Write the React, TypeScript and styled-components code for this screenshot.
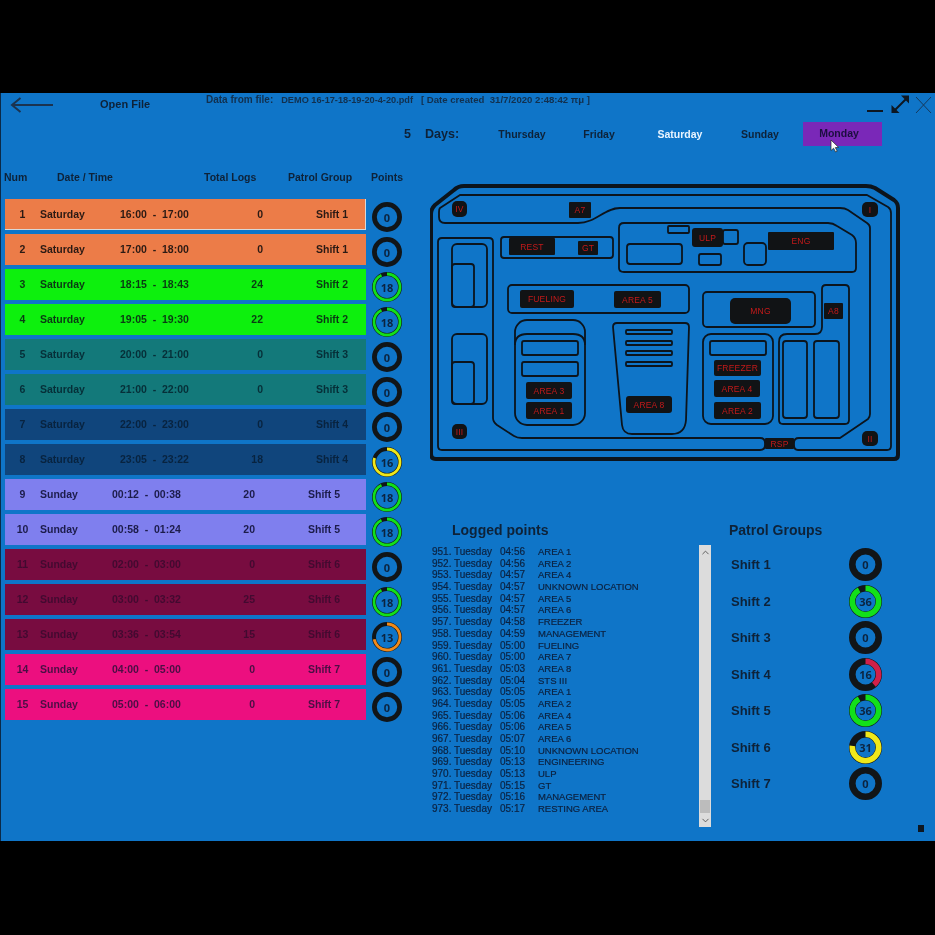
import styled, {createGlobalStyle} from 'styled-components';
import {ChevronUp, ChevronDown} from 'lucide-react';

const GlobalStyle = createGlobalStyle`
	html,
	body {
		margin: 0;
		padding: 0;
		background: #000;
		font-family: 'Liberation Sans', Arial, sans-serif;
	}
`;

interface Shift {
	bg: string;
	ink: string;
}

const shifts: Record<number, Shift> = {
	1: {bg: '#ec7c48', ink: '#2b1a14'},
	2: {bg: '#0df00d', ink: '#0b3a14'},
	3: {bg: '#13797a', ink: '#062f38'},
	4: {bg: '#10457c', ink: '#08233f'},
	5: {bg: '#7f7fee', ink: '#1c1c4a'},
	6: {bg: '#780c40', ink: '#420a30'},
	7: {bg: '#ec0f7f', ink: '#4a0f44'},
};

interface LogRow {
	num: number;
	day: string;
	time: string;
	total: number;
	shift: number;
	points: number;
	part: number;
	color: string;
}

const rows: LogRow[] = [
	{num: 1, day: 'Saturday', time: '16:00  -  17:00', total: 0, shift: 1, points: 0, part: 0, color: '#111'},
	{num: 2, day: 'Saturday', time: '17:00  -  18:00', total: 0, shift: 1, points: 0, part: 0, color: '#111'},
	{num: 3, day: 'Saturday', time: '18:15  -  18:43', total: 24, shift: 2, points: 18, part: 93, color: '#12e01a'},
	{num: 4, day: 'Saturday', time: '19:05  -  19:30', total: 22, shift: 2, points: 18, part: 93, color: '#12e01a'},
	{num: 5, day: 'Saturday', time: '20:00  -  21:00', total: 0, shift: 3, points: 0, part: 0, color: '#111'},
	{num: 6, day: 'Saturday', time: '21:00  -  22:00', total: 0, shift: 3, points: 0, part: 0, color: '#111'},
	{num: 7, day: 'Saturday', time: '22:00  -  23:00', total: 0, shift: 4, points: 0, part: 0, color: '#111'},
	{num: 8, day: 'Saturday', time: '23:05  -  23:22', total: 18, shift: 4, points: 16, part: 80, color: '#f0e81a'},
	{num: 9, day: 'Sunday', time: '00:12  -  00:38', total: 20, shift: 5, points: 18, part: 93, color: '#12e01a'},
	{num: 10, day: 'Sunday', time: '00:58  -  01:24', total: 20, shift: 5, points: 18, part: 93, color: '#12e01a'},
	{num: 11, day: 'Sunday', time: '02:00  -  03:00', total: 0, shift: 6, points: 0, part: 0, color: '#111'},
	{num: 12, day: 'Sunday', time: '03:00  -  03:32', total: 25, shift: 6, points: 18, part: 93, color: '#12e01a'},
	{num: 13, day: 'Sunday', time: '03:36  -  03:54', total: 15, shift: 6, points: 13, part: 72, color: '#f08a1a'},
	{num: 14, day: 'Sunday', time: '04:00  -  05:00', total: 0, shift: 7, points: 0, part: 0, color: '#111'},
	{num: 15, day: 'Sunday', time: '05:00  -  06:00', total: 0, shift: 7, points: 0, part: 0, color: '#111'},
];

const logged = [
	['951.', 'Tuesday', '04:56', 'AREA 1'],
	['952.', 'Tuesday', '04:56', 'AREA 2'],
	['953.', 'Tuesday', '04:57', 'AREA 4'],
	['954.', 'Tuesday', '04:57', 'UNKNOWN LOCATION'],
	['955.', 'Tuesday', '04:57', 'AREA 5'],
	['956.', 'Tuesday', '04:57', 'AREA 6'],
	['957.', 'Tuesday', '04:58', 'FREEZER'],
	['958.', 'Tuesday', '04:59', 'MANAGEMENT'],
	['959.', 'Tuesday', '05:00', 'FUELING'],
	['960.', 'Tuesday', '05:00', 'AREA 7'],
	['961.', 'Tuesday', '05:03', 'AREA 8'],
	['962.', 'Tuesday', '05:04', 'STS III'],
	['963.', 'Tuesday', '05:05', 'AREA 1'],
	['964.', 'Tuesday', '05:05', 'AREA 2'],
	['965.', 'Tuesday', '05:06', 'AREA 4'],
	['966.', 'Tuesday', '05:06', 'AREA 5'],
	['967.', 'Tuesday', '05:07', 'AREA 6'],
	['968.', 'Tuesday', '05:10', 'UNKNOWN LOCATION'],
	['969.', 'Tuesday', '05:13', 'ENGINEERING'],
	['970.', 'Tuesday', '05:13', 'ULP'],
	['971.', 'Tuesday', '05:15', 'GT'],
	['972.', 'Tuesday', '05:16', 'MANAGEMENT'],
	['973.', 'Tuesday', '05:17', 'RESTING AREA'],
];

const groups = [
	{name: 'Shift 1', points: 0, part: 0, color: '#111'},
	{name: 'Shift 2', points: 36, part: 92, color: '#12e01a'},
	{name: 'Shift 3', points: 0, part: 0, color: '#111'},
	{name: 'Shift 4', points: 16, part: 39, color: '#d0204a'},
	{name: 'Shift 5', points: 36, part: 92, color: '#12e01a'},
	{name: 'Shift 6', points: 31, part: 77, color: '#f0e81a'},
	{name: 'Shift 7', points: 0, part: 0, color: '#111'},
];

const days = [
	{name: 'Thursday', width: 80},
	{name: 'Friday', width: 74},
	{name: 'Saturday', width: 88},
	{name: 'Sunday', width: 72},
];

// x, y, w, h, text, corner radius
const mapLabels: [number, number, number, number, string, number][] = [
	[452, 201, 15, 16, 'IV', 5],
	[569, 202, 22, 16, 'A7', 1],
	[862, 202, 16, 15, 'I', 5],
	[509, 238, 46, 17, 'REST', 1],
	[578, 241, 20, 14, 'GT', 1],
	[692, 228, 31, 19, 'ULP', 3],
	[768, 232, 66, 18, 'ENG', 1],
	[520, 290, 54, 18, 'FUELING', 2],
	[614, 291, 47, 17, 'AREA 5', 2],
	[730, 298, 61, 26, 'MNG', 5],
	[824, 303, 19, 16, 'A8', 1],
	[714, 360, 47, 16, 'FREEZER', 2],
	[714, 380, 46, 17, 'AREA 4', 2],
	[714, 402, 47, 17, 'AREA 2', 2],
	[526, 382, 46, 17, 'AREA 3', 2],
	[526, 402, 46, 17, 'AREA 1', 2],
	[626, 396, 46, 17, 'AREA 8', 3],
	[452, 424, 15, 15, 'III', 5],
	[862, 431, 16, 15, 'II', 5],
	[765, 438, 29, 11, 'RSP', 1],
];

// x, y, w, h, corner radius
const mapBoxes: [number, number, number, number, number][] = [
	[501, 237, 112, 21, 3],
	[508, 285, 181, 28, 4],
	[452, 244, 35, 63, 5],
	[452, 264, 22, 43, 3],
	[452, 334, 35, 70, 5],
	[452, 362, 22, 42, 3],
	[515, 320, 70, 105, 12],
	[522, 341, 56, 14, 2],
	[522, 362, 56, 14, 2],
	[627, 244, 55, 20, 3],
	[668, 226, 21, 7, 1],
	[723, 230, 15, 14, 2],
	[699, 254, 22, 11, 2],
	[744, 243, 22, 22, 4],
	[703, 292, 112, 35, 4],
	[703, 334, 70, 90, 8],
	[710, 341, 56, 14, 2],
	[783, 341, 24, 77, 3],
	[814, 341, 25, 77, 3],
	[626, 330, 46, 4, 1],
	[626, 341, 46, 4, 1],
	[626, 351, 46, 4, 1],
	[626, 362, 46, 4, 1],
];

const FacilityMap = () => (
	<MapDrawing viewBox="430 184 472 280">
		<g fill="none" stroke="#0c141c" strokeLinejoin="round">
			<path
				strokeWidth="4"
				d="M464 186 H866 Q871 186 875 188 L894 200 Q898 203 898 208 V455 Q898 459 894 459 H436 Q431 459 431 454 V214 Q431 209 435 205 L454 190 Q458 186 464 186 Z"
			/>
			<g strokeWidth="1.8">
				<path d="M440 208 L460 195 H867 L888 207 Q891 209 891 213 V446 Q891 450 887 450 H798 Q794 450 794 445 V443 Q794 438 799 438 H840 L868 419 Q870 417 870 414 V228 Q870 225 867 223 L848 210 Q845 208 840 208 H620 C604 208 596 223 578 223 H445 Q439 223 439 217 V212 Q439 209 440 208 Z" />
				<path d="M442 238 H489 Q493 238 493 242 V418 Q493 422 497 425 L514 436 Q517 438 522 438 H760 Q765 438 765 443 V445 Q765 450 760 450 H442 Q438 450 438 446 V242 Q438 238 442 238 Z" />
				<path d="M624 223 H828 Q833 223 837 226 L852 235 Q856 238 856 243 V268 Q856 272 852 272 H624 Q619 272 619 268 V228 Q619 223 624 223 Z" />
				<path d="M826 285 H845 Q849 285 849 289 V420 Q849 424 845 424 H783 Q779 424 779 420 V342 Q779 334 787 334 H815 Q822 334 822 327 V289 Q822 285 826 285 Z" />
				<path d="M617 323 H685 Q689 323 689 327 L686 420 Q685 434 672 434 H632 Q623 434 622 425 L613 327 Q613 323 617 323 Z" />
				<path d="M515 345 Q515 334 527 334 H573 Q585 334 585 345" />
				{mapBoxes.map(([x, y, w, h, r], i) => (
					<rect key={i} x={x} y={y} width={w} height={h} rx={r} />
				))}
			</g>
		</g>
		{mapLabels.map(([x, y, w, h, text, r]) => (
			<g key={text}>
				<rect x={x} y={y} width={w} height={h} rx={r} fill="#111315" />
				<MapText x={x + w / 2} y={y + h / 2 + 3}>
					{text}
				</MapText>
			</g>
		))}
	</MapDrawing>
);

interface RingProps {
	value: number;
	part: number;
	color: string;
	big?: boolean;
}

const Ring = ({value, part, color, big}: RingProps) => {
	const size = big ? 33 : 30;
	const width = big ? 6.6 : part ? 4 : 4.8;
	const radius = (size - width) / 2;
	const mid = size / 2;
	return (
		<RingDrawing $big={big} viewBox={`0 0 ${size} ${size}`}>
			<circle cx={mid} cy={mid} r={radius} fill="none" stroke="#111518" strokeWidth={width} />
			{part > 0 && (
				<circle
					cx={mid}
					cy={mid}
					r={radius}
					fill="none"
					stroke={color}
					strokeWidth={big ? width - 1 : width - 1.2}
					pathLength={100}
					strokeDasharray={`${part} 100`}
					transform={`rotate(-90 ${mid} ${mid})`}
				/>
			)}
			<RingText x={mid} y={mid + 4.5}>
				{value}
			</RingText>
		</RingDrawing>
	);
};

export default function App() {
	return (
		<Page>
			<GlobalStyle />
			<Window>
				<TitleBar>
					<BackArrow viewBox="0 0 44 18">
						<path d="M43 9 H2 M10.5 2 L2 9 L10.5 16" fill="none" stroke="#1b3350" strokeWidth="2" />
					</BackArrow>
					<OpenFile>Open File</OpenFile>
					<FileInfo>
						Data from file:<FileName>DEMO 16-17-18-19-20-4-20.pdf</FileName>
						<FileDate>[ Date created&nbsp; 31/7/2020 2:48:42 πμ ]</FileDate>
					</FileInfo>
					<WindowControls viewBox="0 0 68 24">
						<path d="M0 18 H16" stroke="#0d1722" strokeWidth="2" />
						<path d="M26 19 L40 5" stroke="#0d1722" strokeWidth="2" />
						<path d="M34 2.5 H42 V10.5 Z M24.5 12 V20 H32.5 Z" fill="#0d1722" />
						<path d="M49 4 L64 20 M64 4 L49 20" stroke="#16395c" strokeWidth="1" />
					</WindowControls>
				</TitleBar>
				<DaysBar>
					<DayCount>5</DayCount>
					<DaysLabel>Days:</DaysLabel>
					{days.map((day) => (
						<DayTab key={day.name} $width={day.width} $active={day.name === 'Saturday'}>
							{day.name}
						</DayTab>
					))}
					<HoverTab>
						Monday
						<Cursor viewBox="0 0 10 14">
							<path d="M1 1 V11.5 L3.6 9.2 L5.6 13 L7.2 12.2 L5.3 8.6 L8.6 8.4 Z" fill="#fff" stroke="#222" strokeWidth="0.7" />
						</Cursor>
					</HoverTab>
				</DaysBar>
				<Body>
					<LeftColumn>
						<TableHead>
							<HeadNum>Num</HeadNum>
							<HeadDate>Date / Time</HeadDate>
							<HeadTotal>Total Logs</HeadTotal>
							<HeadGroup>Patrol Group</HeadGroup>
							<HeadPoints>Points</HeadPoints>
						</TableHead>
						<RowList>
							{rows.map((row) => (
								<RowLine key={row.num}>
									<RowBar $bg={shifts[row.shift].bg} $ink={shifts[row.shift].ink} $selected={row.num === 1}>
										<NumCell>{row.num}</NumCell>
										<DayCell $sunday={row.day === 'Sunday'}>{row.day}</DayCell>
										<TimeCell>{row.time}</TimeCell>
										<TotalCell>{row.total}</TotalCell>
										<ShiftCell>Shift {row.shift}</ShiftCell>
									</RowBar>
									<RingSlot>
										<Ring value={row.points} part={row.part} color={row.color} />
									</RingSlot>
								</RowLine>
							))}
						</RowList>
					</LeftColumn>
					<RightColumn>
						<FacilityMap />
						<Panels>
							<LoggedPanel>
								<LoggedTitle>Logged points</LoggedTitle>
								<ListBox>
									<LogList>
										{logged.map(([num, day, time, place]) => (
											<LogLine key={num}>
												<LogNum>{num}</LogNum>
												<LogDay>{day}</LogDay>
												<LogTime>{time}</LogTime>
												<LogPlace>{place}</LogPlace>
											</LogLine>
										))}
									</LogList>
									<ScrollBar>
										<ScrollButton>
											<ChevronUp size={11} strokeWidth={2} />
										</ScrollButton>
										<ScrollTrack>
											<ScrollThumb />
										</ScrollTrack>
										<ScrollButton>
											<ChevronDown size={11} strokeWidth={2} />
										</ScrollButton>
									</ScrollBar>
								</ListBox>
							</LoggedPanel>
							<GroupPanel>
								<GroupTitle>Patrol Groups</GroupTitle>
								<GroupList>
									{groups.map((group) => (
										<GroupRow key={group.name}>
											<GroupName>{group.name}</GroupName>
											<Ring value={group.points} part={group.part} color={group.color} big />
										</GroupRow>
									))}
								</GroupList>
							</GroupPanel>
						</Panels>
					</RightColumn>
				</Body>
				<ResizeGrip />
			</Window>
		</Page>
	);
}

const Page = styled.div`
	width: 935px;
	height: 935px;
	padding-top: 93px;
	box-sizing: border-box;
	background: #000;
	overflow: hidden;
`;

const Window = styled.div`
	position: relative;
	height: 748px;
	background: #0f75c8;
	border-left: 1px solid #0b2a48;
	box-sizing: border-box;
	color: #0e2238;
	filter: blur(0.35px);
`;

const TitleBar = styled.div`
	display: flex;
	align-items: flex-start;
	height: 22px;
`;

const BackArrow = styled.svg`
	width: 44px;
	height: 18px;
	margin: 3px 0 0 9px;
`;

const OpenFile = styled.div`
	width: 106px;
	margin: 5px 0 0 46px;
	font-size: 11px;
	font-weight: 700;
	line-height: 13px;
`;

const FileInfo = styled.div`
	margin-top: 1px;
	font-size: 10px;
	font-weight: 700;
	line-height: 12px;
	color: #12304e;
	white-space: pre;
`;

const FileName = styled.span`
	margin-left: 8px;
	font-size: 9.2px;
`;

const FileDate = styled.span`
	margin-left: 8px;
	font-size: 9.6px;
`;

const WindowControls = styled.svg`
	width: 68px;
	height: 24px;
	margin-left: auto;
`;

const DaysBar = styled.div`
	display: flex;
	align-items: center;
	height: 24px;
	margin-top: 7px;
	padding-left: 403px;
`;

const DayCount = styled.div`
	width: 21px;
	font-size: 12.5px;
	font-weight: 700;
`;

const DaysLabel = styled.div`
	width: 57px;
	font-size: 12.5px;
	font-weight: 700;
`;

const DayTab = styled.div<{$width: number; $active?: boolean}>`
	width: ${(p) => p.$width}px;
	line-height: 23px;
	text-align: center;
	font-size: 10.5px;
	font-weight: 700;
	color: ${(p) => (p.$active ? '#e8f4ff' : '#0e2238')};
`;

const HoverTab = styled.div`
	position: relative;
	width: 72px;
	height: 24px;
	margin-left: 7px;
	padding-right: 7px;
	line-height: 23px;
	text-align: center;
	font-size: 10.5px;
	font-weight: 700;
	color: #1c0e40;
	background: #7a28b8;
`;

const Cursor = styled.svg`
	position: absolute;
	left: 27px;
	top: 17px;
	width: 10px;
	height: 14px;
`;

const Body = styled.div`
	display: grid;
	grid-template-columns: 414px 1fr;
	margin-top: 24px;
`;

const LeftColumn = styled.div`
	display: flex;
	flex-direction: column;
`;

const TableHead = styled.div`
	display: flex;
	height: 29px;
	padding-left: 3px;
	font-size: 10.5px;
	font-weight: 700;
	line-height: 14px;
`;

const HeadNum = styled.div`
	width: 53px;
`;

const HeadDate = styled.div`
	width: 147px;
`;

const HeadTotal = styled.div`
	width: 84px;
`;

const HeadGroup = styled.div`
	width: 83px;
`;

const HeadPoints = styled.div``;

const RowList = styled.div`
	display: flex;
	flex-direction: column;
	gap: 4px;
	padding-left: 4px;
`;

const RowLine = styled.div`
	display: flex;
	height: 31px;
`;

const RowBar = styled.div<{$bg: string; $ink: string; $selected?: boolean}>`
	display: flex;
	align-items: center;
	width: 361px;
	height: 31px;
	box-sizing: border-box;
	background: ${(p) => p.$bg};
	color: ${(p) => p.$ink};
	border-right: 1px solid ${(p) => (p.$selected ? '#d8d8d8' : 'transparent')};
	border-bottom: 1px solid ${(p) => (p.$selected ? '#d8d8d8' : 'transparent')};
	font-size: 10.5px;
	font-weight: 700;
`;

const NumCell = styled.div`
	width: 35px;
	text-align: center;
`;

const DayCell = styled.div<{$sunday?: boolean}>`
	width: ${(p) => (p.$sunday ? '72px' : '80px')};
`;

const TimeCell = styled.div`
	width: 67px;
	white-space: pre;
`;

const TotalCell = styled.div`
	width: 76px;
	text-align: right;
`;

const ShiftCell = styled.div`
	padding-left: 53px;
`;

const RingSlot = styled.div`
	margin: 3px 0 0 6px;
`;

const RingDrawing = styled.svg<{$big?: boolean}>`
	display: block;
	width: ${(p) => (p.$big ? '33px' : '30px')};
	height: ${(p) => (p.$big ? '33px' : '30px')};
`;

const RingText = styled.text`
	font-family: 'Open Sans', 'Liberation Sans', sans-serif;
	font-size: 11px;
	font-weight: 700;
	fill: #0c2440;
	text-anchor: middle;
`;

const RightColumn = styled.div`
	display: flex;
	flex-direction: column;
	padding: 14px 0 0 15px;
`;

const MapDrawing = styled.svg`
	display: block;
	width: 472px;
	height: 280px;
`;

const MapText = styled.text`
	font-family: 'Liberation Sans', Arial, sans-serif;
	font-size: 8.5px;
	letter-spacing: 0.2px;
	fill: #c41a1a;
	text-anchor: middle;
`;

const Panels = styled.div`
	display: flex;
	margin-top: 58px;
`;

const LoggedPanel = styled.div`
	width: 281px;
`;

const LoggedTitle = styled.h2`
	margin: 0 0 7px;
	padding-left: 22px;
	font-size: 14px;
	font-weight: 700;
	line-height: 16px;
`;

const ListBox = styled.div`
	display: flex;
	height: 282px;
`;

const LogList = styled.div`
	flex: 1;
	padding: 1px 0 0 2px;
	font-size: 10px;
	line-height: 11.68px;
	color: #0c2240;
	-webkit-text-stroke: 0.2px #0c2240;
`;

const LogLine = styled.div`
	display: flex;
	white-space: pre;
`;

const LogNum = styled.span`
	width: 22px;
`;

const LogDay = styled.span`
	width: 46px;
`;

const LogTime = styled.span`
	width: 38px;
`;

const LogPlace = styled.span`
	font-size: 9.5px;
`;

const ScrollBar = styled.div`
	display: flex;
	flex-direction: column;
	width: 12px;
	background: #dcdcdc;
`;

const ScrollButton = styled.div`
	display: flex;
	align-items: center;
	justify-content: center;
	height: 14px;
	color: #555;
`;

const ScrollTrack = styled.div`
	flex: 1;
	display: flex;
	flex-direction: column;
	justify-content: flex-end;
`;

const ScrollThumb = styled.div`
	height: 13px;
	margin: 0 1px;
	background: #bcbcbc;
`;

const GroupPanel = styled.div`
	margin-left: 18px;
`;

const GroupTitle = styled.h2`
	margin: 0 0 10px;
	font-size: 14px;
	font-weight: 700;
	line-height: 16px;
`;

const GroupList = styled.div`
	display: flex;
	flex-direction: column;
	gap: 3.5px;
`;

const GroupRow = styled.div`
	display: flex;
	align-items: center;
	padding-left: 2px;
`;

const GroupName = styled.div`
	width: 117.5px;
	font-size: 13px;
	font-weight: 700;
`;

const ResizeGrip = styled.div`
	position: absolute;
	right: 11px;
	bottom: 9px;
	width: 6px;
	height: 7px;
	background: #0d1722;
`;
